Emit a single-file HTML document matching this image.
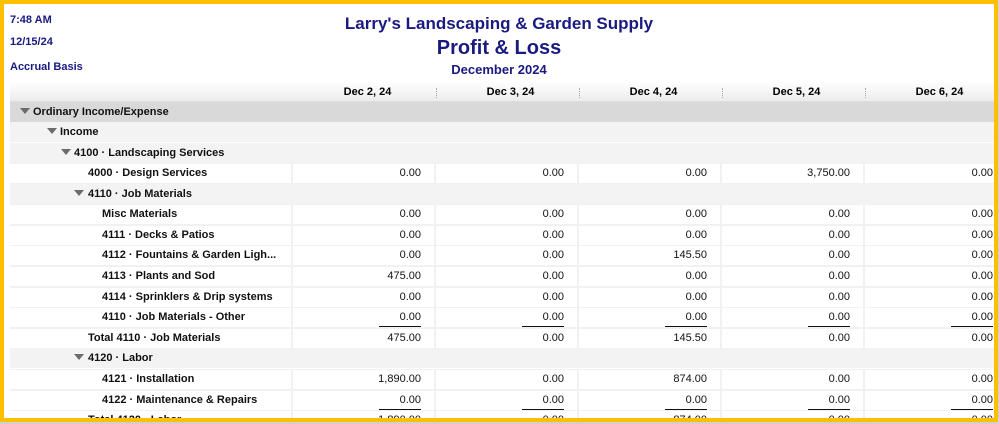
<!DOCTYPE html>
<html><head><meta charset="utf-8"><style>
*{margin:0;padding:0;box-sizing:border-box}
body{width:999px;height:424px;overflow:hidden;background:#d0d0d0;font-family:"Liberation Sans",Arial,sans-serif;position:relative}
#frame{position:absolute;left:0;top:0;width:998px;height:422px;border:4px solid #fdbf00;background:#fff;overflow:hidden}
.a{position:absolute;white-space:nowrap}
.info{color:#1a1a80;font-weight:bold;font-size:11px;left:6px}
.t{color:#1a1a80;font-weight:bold;text-align:center;left:0;width:990px}
.hdr{position:absolute;left:6px;top:78px;width:990px;height:20px;background:linear-gradient(#fff,#ececec);border-bottom:1px solid #ddd}
.hdr span{position:absolute;top:4px;font-size:11px;font-weight:bold;width:143px;text-align:center}
.dots{position:absolute;top:6px;width:1px;height:10px;border-left:1px dotted #aaa}
.row{position:absolute;left:6px;width:990px;height:21px;font-size:11px}
.sec{background:#f3f3f3;border-bottom:1px solid #fff}
.ord{background:#d9d9d9;border-bottom:1px solid #fff}
.dat{background:#f1f1f1}
.lab{position:absolute;top:4px;font-weight:bold;color:#111}
.tri{position:absolute;top:6px;width:0;height:0;border-left:5px solid transparent;border-right:5px solid transparent;border-top:6px solid #6b6b6b}
.c{position:absolute;top:1px;height:19px;background:#fff;width:141px;text-align:right;padding-right:13px;padding-top:3px;color:#111}
.lc{position:absolute;top:1px;height:19px;left:0;width:281px;background:#fff}
.u{position:absolute;top:0;right:13px;width:42px;border-bottom:1px solid #111;height:19px}
</style></head><body><div id="frame">
<div class="a info" style="top:10px">7:48 AM</div>
<div class="a info" style="top:32px">12/15/24</div>
<div class="a info" style="top:57px">Accrual Basis</div>
<div class="a t" style="top:10px;font-size:17px">Larry's Landscaping &amp; Garden Supply</div>
<div class="a t" style="top:33px;font-size:20px">Profit &amp; Loss</div>
<div class="a t" style="top:58px;font-size:13px">December 2024</div>
<div class="hdr">
<span style="left:286px">Dec 2, 24</span><span style="left:429px">Dec 3, 24</span><span style="left:572px">Dec 4, 24</span><span style="left:715px">Dec 5, 24</span><span style="left:858px">Dec 6, 24</span>
<div class="dots" style="left:426px"></div><div class="dots" style="left:569px"></div><div class="dots" style="left:712px"></div><div class="dots" style="left:855px"></div>
</div>

<div class="row ord" style="top:98px"><div class="tri" style="left:10px"></div><div class="lab" style="left:23px">Ordinary Income/Expense</div></div>
<div class="row sec" style="top:118px"><div class="tri" style="left:37px"></div><div class="lab" style="left:50px">Income</div></div>
<div class="row sec" style="top:139px"><div class="tri" style="left:51px"></div><div class="lab" style="left:64px">4100 · Landscaping Services</div></div>
<div class="row dat" style="top:159px"><div class="lc"></div><div class="lab" style="left:78px">4000 · Design Services</div><div class="c" style="left:283px">0.00</div><div class="c" style="left:426px">0.00</div><div class="c" style="left:569px">0.00</div><div class="c" style="left:712px">3,750.00</div><div class="c" style="left:855px">0.00</div></div>
<div class="row sec" style="top:180px"><div class="tri" style="left:64px"></div><div class="lab" style="left:78px">4110 · Job Materials</div></div>
<div class="row dat" style="top:200px"><div class="lc"></div><div class="lab" style="left:92px">Misc Materials</div><div class="c" style="left:283px">0.00</div><div class="c" style="left:426px">0.00</div><div class="c" style="left:569px">0.00</div><div class="c" style="left:712px">0.00</div><div class="c" style="left:855px">0.00</div></div>
<div class="row dat" style="top:221px"><div class="lc"></div><div class="lab" style="left:92px">4111 · Decks &amp; Patios</div><div class="c" style="left:283px">0.00</div><div class="c" style="left:426px">0.00</div><div class="c" style="left:569px">0.00</div><div class="c" style="left:712px">0.00</div><div class="c" style="left:855px">0.00</div></div>
<div class="row dat" style="top:241px"><div class="lc"></div><div class="lab" style="left:92px">4112 · Fountains &amp; Garden Ligh...</div><div class="c" style="left:283px">0.00</div><div class="c" style="left:426px">0.00</div><div class="c" style="left:569px">145.50</div><div class="c" style="left:712px">0.00</div><div class="c" style="left:855px">0.00</div></div>
<div class="row dat" style="top:262px"><div class="lc"></div><div class="lab" style="left:92px">4113 · Plants and Sod</div><div class="c" style="left:283px">475.00</div><div class="c" style="left:426px">0.00</div><div class="c" style="left:569px">0.00</div><div class="c" style="left:712px">0.00</div><div class="c" style="left:855px">0.00</div></div>
<div class="row dat" style="top:283px"><div class="lc"></div><div class="lab" style="left:92px">4114 · Sprinklers &amp; Drip systems</div><div class="c" style="left:283px">0.00</div><div class="c" style="left:426px">0.00</div><div class="c" style="left:569px">0.00</div><div class="c" style="left:712px">0.00</div><div class="c" style="left:855px">0.00</div></div>
<div class="row dat" style="top:303px"><div class="lc"></div><div class="lab" style="left:92px">4110 · Job Materials - Other</div><div class="c" style="left:283px">0.00<div class="u"></div></div><div class="c" style="left:426px">0.00<div class="u"></div></div><div class="c" style="left:569px">0.00<div class="u"></div></div><div class="c" style="left:712px">0.00<div class="u"></div></div><div class="c" style="left:855px">0.00<div class="u"></div></div></div>
<div class="row dat" style="top:324px"><div class="lc"></div><div class="lab" style="left:78px">Total 4110 · Job Materials</div><div class="c" style="left:283px">475.00</div><div class="c" style="left:426px">0.00</div><div class="c" style="left:569px">145.50</div><div class="c" style="left:712px">0.00</div><div class="c" style="left:855px">0.00</div></div>
<div class="row sec" style="top:344px"><div class="tri" style="left:64px"></div><div class="lab" style="left:78px">4120 · Labor</div></div>
<div class="row dat" style="top:365px"><div class="lc"></div><div class="lab" style="left:92px">4121 · Installation</div><div class="c" style="left:283px">1,890.00</div><div class="c" style="left:426px">0.00</div><div class="c" style="left:569px">874.00</div><div class="c" style="left:712px">0.00</div><div class="c" style="left:855px">0.00</div></div>
<div class="row dat" style="top:386px"><div class="lc"></div><div class="lab" style="left:92px">4122 · Maintenance &amp; Repairs</div><div class="c" style="left:283px">0.00<div class="u"></div></div><div class="c" style="left:426px">0.00<div class="u"></div></div><div class="c" style="left:569px">0.00<div class="u"></div></div><div class="c" style="left:712px">0.00<div class="u"></div></div><div class="c" style="left:855px">0.00<div class="u"></div></div></div>
<div class="row dat" style="top:406px"><div class="lc"></div><div class="lab" style="left:78px">Total 4120 · Labor</div><div class="c" style="left:283px">1,890.00</div><div class="c" style="left:426px">0.00</div><div class="c" style="left:569px">874.00</div><div class="c" style="left:712px">0.00</div><div class="c" style="left:855px">0.00</div></div>
</div></body></html>
